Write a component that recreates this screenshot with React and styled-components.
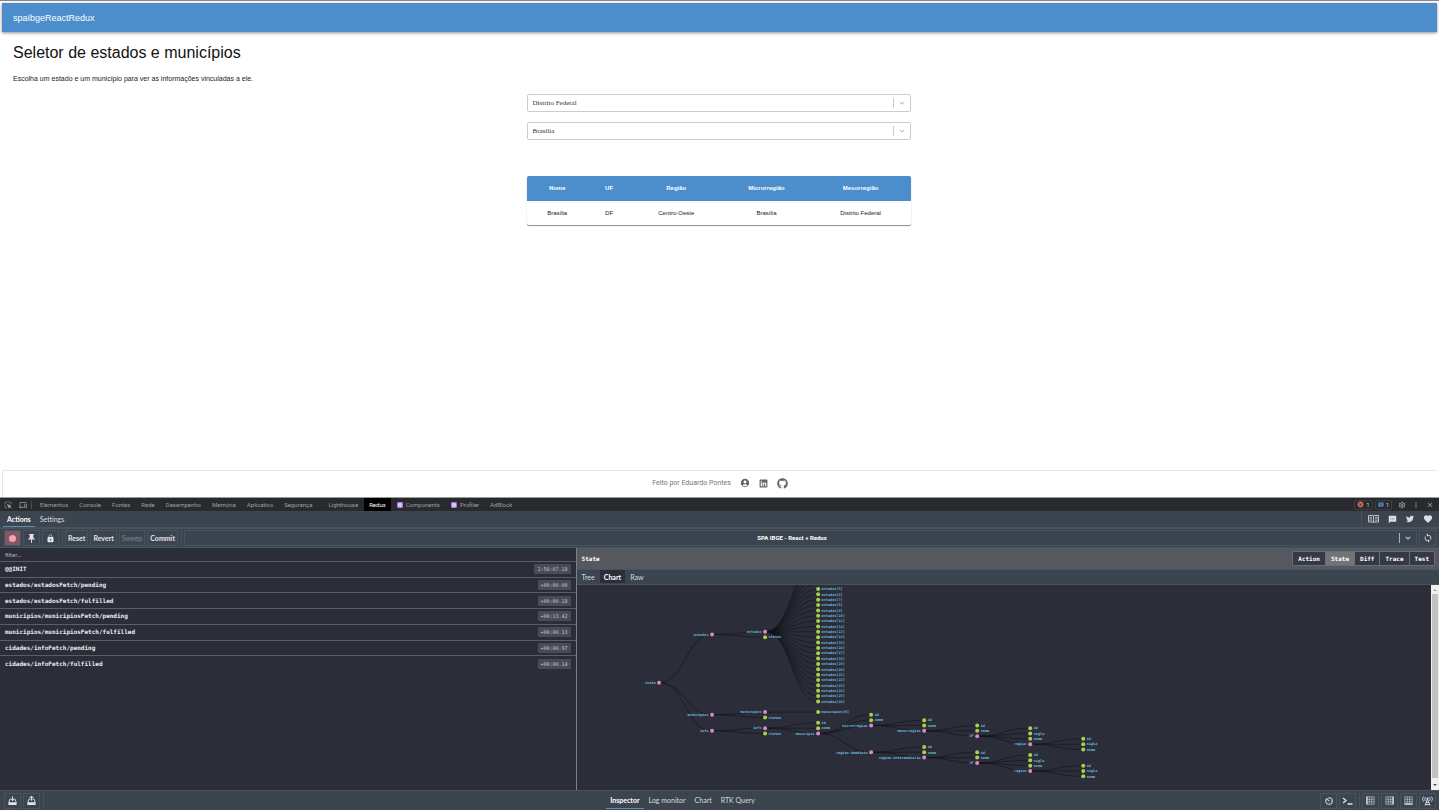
import styled, { createGlobalStyle } from "styled-components";
import {
  MdAccountCircle,
  MdPushPin,
  MdLock,
  MdSms,
  MdFavorite,
  MdSync,
  MdClose,
  MdMoreVert,
  MdOutlineSettings,
  MdAvTimer,
  MdKeyboardArrowDown,
  MdOutlineDevices,
  MdMessage,
  MdCancel,
} from "react-icons/md";
import { FaLinkedin, FaGithub, FaTwitter } from "react-icons/fa";
import { TiDownload, TiUpload } from "react-icons/ti";

const blue = "#4b8ecb";
const dark = "#2b2e39";
const bar = "#3c4450";
const line = "#465460";
const grey = "#5a5e66";
const mono = `"DejaVu Sans Mono", "Liberation Mono", monospace`;

const GlobalStyle = createGlobalStyle`
  * {
    box-sizing: border-box;
  }

  body {
    margin: 0;
    font-family: "Liberation Sans", Arial, sans-serif;
    background: #fff;
  }

  button, input, select {
    font: inherit;
    color: inherit;
    margin: 0;
    padding: 0;
    border: none;
    background: none;
    outline: none;
  }

  button {
    cursor: pointer;
  }

  svg {
    display: block;
    flex: none;
  }
`;

const Container = styled.div`
  display: flex;
  flex-direction: column;
  min-height: 100vh;
`;

/* page */
const Page = styled.div`
  display: flex;
  flex-direction: column;
  flex: 1;
  padding: 2px 2px 0;
  border-top: 1px solid #8c8686;
`;
const Header = styled.header`
  display: flex;
  align-items: center;
  height: 29px;
  padding: 0 11px;
  background-color: ${blue};
  color: white;
  font-size: 9px;
  box-shadow: 0 1px 3px rgba(0, 0, 0, 0.45);
`;
const Main = styled.main`
  flex: 1;
  padding: 11px 13px 11px 11px;
`;
const Title = styled.h1`
  margin: 0;
  font-size: 16px;
  font-weight: 400;
  line-height: 20px;
  color: #111;
`;
const Desc = styled.p`
  margin: 11px 0 10px;
  font-size: 7px;
  line-height: 10px;
  color: #222;
`;
const Content = styled.div`
  display: flex;
  flex-direction: column;
  gap: 10px;
  max-width: 384px;
  margin: 0 auto;
`;
const SelectBox = styled.label`
  display: flex;
  align-items: center;
  height: 18px;
  border: 1px solid #ccc;
  border-radius: 2px;
  color: #bbb;
`;
const Select = styled.select`
  flex: 1;
  height: 10px;
  padding: 0 5px;
  appearance: none;
  border-right: 1px solid #ccc;
  font-family: "Liberation Serif", serif;
  font-size: 7px;
  line-height: 10px;
  color: #333;
`;
const Arrow = styled.span`
  padding: 0 3px;
`;
const Table = styled.table`
  width: 100%;
  margin-top: 26px;
  table-layout: fixed;
  border-collapse: collapse;
  border-radius: 2px;
  overflow: hidden;
  font-size: 6px;
  text-align: center;
  box-shadow: 0 1px 1px rgba(0, 0, 0, 0.45);
`;
const Th = styled.th`
  width: ${(props) => props.$width};
  height: 25px;
  padding: 0 0 1px;
  background-color: ${blue};
  color: white;
`;
const Td = styled.td`
  height: 24px;
  padding: 0;
  color: #222;
`;
const Footer = styled.footer`
  display: flex;
  align-items: center;
  justify-content: center;
  gap: 9px;
  height: 27px;
  padding-bottom: 2px;
  border: 1px solid #e7e7e7;
  border-width: 1px 0 0 1px;
  font-family: Roboto, sans-serif;
  font-size: 7px;
  line-height: 8px;
  color: #757575;
`;
const FooterLink = styled.a`
  color: #666;
`;

/* devtools */
const Devtools = styled.section`
  display: flex;
  flex-direction: column;
  background-color: ${bar};
  color: #d8dade;
  font-family: Lato, sans-serif;
  font-size: 7px;
  line-height: 10px;
`;
const ChromeBar = styled.nav`
  display: flex;
  align-items: center;
  gap: 1px;
  height: 14px;
  border-top: 1px solid #9a9a9a;
  background-color: #292a2d;
  color: #9aa0a6;
  font-family: Roboto, sans-serif;
  font-size: 6px;
`;
const ChromeIcons = styled.div`
  display: flex;
  align-items: center;
  gap: 7px;
  height: 8px;
  padding: 0 4px;
  margin-right: 2px;
  border-right: 1px solid #494c50;
`;
const ChromeTab = styled.button`
  display: flex;
  align-items: center;
  gap: 3px;
  height: 13px;
  padding: 0 5px;
  margin-left: ${(props) => (props.$spaced ? "5px" : "0")};
  white-space: nowrap;
  background-color: ${(props) => (props.$active ? "#000" : "transparent")};
  color: ${(props) => (props.$active ? "#fff" : "inherit")};
`;
const ChromeRight = styled.div`
  display: flex;
  align-items: center;
  gap: 6px;
  margin-left: auto;
  padding-right: 5px;
`;
const Counters = styled.div`
  display: flex;
  gap: 2px;
`;
const Counter = styled.button`
  display: flex;
  align-items: center;
  gap: 2px;
  height: 10px;
  padding: 0 2px;
  border: 1px solid #3c3f43;
  border-radius: 2px;
  color: #d0d3d7;
`;
const TopBar = styled.div`
  display: flex;
  justify-content: space-between;
  height: 17px;
  border-bottom: 1px solid ${line};
`;
const Tabs = styled.div`
  display: flex;
  padding-left: 3px;
`;
const Tab = styled.button`
  padding: 0 4px;
  margin-right: 1px;
  font-weight: ${(props) => (props.$active ? "700" : "400")};
  color: ${(props) => (props.$active ? "#fff" : "inherit")};
  border-bottom: 1px solid
    ${(props) => (props.$active ? "#5a92ad" : "transparent")};
`;
const Links = styled.div`
  display: flex;
  align-items: center;
  gap: 9px;
  padding: 0 6px;
  border-left: 1px solid ${line};
`;
const IconLink = styled.a`
  color: #dcdee2;
`;
const Toolbar = styled.div`
  display: flex;
  align-items: center;
  height: 20px;
  padding: 0 3px 0 4px;
  border-top: 1px solid ${line};
  border-bottom: 1px solid ${line};
`;
const Group = styled.div`
  display: flex;
  gap: 2px;
  padding-right: 3px;
  margin-right: 2px;
  border-right: 1px solid ${line};

  &:last-child {
    padding-right: 0;
    margin-right: 0;
    border-right: none;
  }
`;
const ToolButton = styled.button`
  display: flex;
  align-items: center;
  justify-content: center;
  min-width: 17px;
  height: 16px;
  padding: 0 2px;
  border: 1px solid ${line};
  font-weight: 700;
  color: #e2e4e8;
  background-color: ${(props) => (props.$recording ? "#7d5866" : "transparent")};

  &:disabled {
    color: #7f8690;
    font-weight: 400;
  }
`;
const Dot = styled.span`
  width: 7px;
  height: 7px;
  border-radius: 50%;
  background-color: #fb9fb1;
`;
const InstanceBox = styled.label`
  display: flex;
  flex: 1;
  align-items: center;
  height: 16px;
  margin-right: 2px;
  border: 1px solid ${line};
`;
const Instance = styled.select`
  flex: 1;
  height: 10px;
  appearance: none;
  border-right: 1px solid #aab0b8;
  text-align: center;
  text-align-last: center;
  font-family: Roboto, sans-serif;
  font-size: 6px;
  font-weight: 700;
  color: #fff;
`;
const Panels = styled.div`
  display: flex;
  min-height: 242px;
  background-color: ${dark};
`;
const ActionPanel = styled.div`
  display: flex;
  flex-direction: column;
  width: 40%;
`;
const Filter = styled.input`
  height: 14px;
  padding: 0 5px;
  border-bottom: 1px solid ${grey};
  font-size: 6px;

  &::placeholder {
    color: #b4b7bd;
    opacity: 1;
  }
`;
const ActionList = styled.div`
  display: grid;
  grid-auto-rows: 1fr;
  min-height: 110px;
`;
const Action = styled.div`
  display: flex;
  align-items: center;
  justify-content: space-between;
  padding: 0 5px;
  font-family: ${mono};
  font-size: 6px;
  font-weight: 700;
  color: #eceef1;
  border-bottom: 1px solid ${grey};

  &:last-child {
    border-bottom: none;
  }
`;
const Time = styled.time`
  padding: 0 3px;
  border-radius: 1px;
  background-color: #484c56;
  font-size: 5px;
  font-weight: 400;
  color: #c3c5ca;
`;
const StatePanel = styled.div`
  display: flex;
  flex: 1;
  flex-direction: column;
  min-width: 0;
  border-left: 1px solid #7c8087;
`;
const StateHeader = styled.div`
  display: flex;
  align-items: center;
  justify-content: space-between;
  height: 21px;
  padding: 0 4px 0 5px;
  background-color: #55595f;
  font-family: ${mono};
  font-size: 6px;
  font-weight: 700;
  color: #fff;
`;
const ViewButtons = styled.div`
  display: flex;
  border: 1px solid #6a6e75;
  border-radius: 2px;
`;
const ViewButton = styled.button`
  height: 13px;
  padding: 0 5px;
  border-left: 1px solid #6a6e75;
  background-color: ${(props) => (props.$active ? "#717479" : "#353945")};

  &:first-child {
    border-left: none;
  }
`;
const SubTabs = styled.div`
  display: flex;
  height: 16px;
  padding: 0 1px 1px;
  border-top: 1px solid ${line};
  border-bottom: 1px solid ${line};
  background-color: ${bar};
`;
const SubTab = styled.button`
  padding: 0 4px;
  margin-right: 1px;
  font-weight: ${(props) => (props.$active ? "700" : "400")};
  color: ${(props) => (props.$active ? "#fff" : "inherit")};
  background-color: ${(props) => (props.$active ? dark : "transparent")};
`;
const ChartArea = styled.div`
  display: flex;
  flex: 1;
`;
const ChartSvg = styled.svg`
  flex: 1;
  min-width: 0;
  height: 205px;
`;
const Link = styled.path`
  fill: none;
  stroke: #101218;
  stroke-width: 1.2;
`;
const Node = styled.circle`
  fill: ${(props) => (props.$leaf ? "#acd04a" : "#e085cc")};
`;
const Label = styled.text`
  fill: #6cb6dc;
  font-family: ${mono};
  font-size: 7px;
  font-weight: 700;
`;
const Scrollbar = styled.div`
  display: flex;
  flex-direction: column;
  align-items: center;
  justify-content: space-between;
  width: 8px;
  background-color: #f1f1f1;
`;
const Thumb = styled.div`
  flex: 1;
  width: 6px;
  margin-bottom: 3px;
  background-color: #c1c1c1;
`;
const ScrollArrow = styled.svg`
  width: 8px;
  height: 9px;
  fill: ${(props) => (props.$dim ? "#a3a3a3" : "#505050")};
`;
const BottomBar = styled.div`
  display: flex;
  align-items: center;
  justify-content: space-between;
  height: 20px;
  padding: 0 3px 0 4px;
  border-top: 1px solid ${line};
`;
const BottomTabs = styled.div`
  display: flex;
  height: 17px;
`;
const BottomRight = styled.div`
  display: flex;
`;

const columns = [
  { name: "Nome", value: "Brasília", width: "16%" },
  { name: "UF", value: "DF", width: "11%" },
  { name: "Região", value: "Centro-Oeste", width: "24%" },
  { name: "Microrregião", value: "Brasília", width: "23%" },
  { name: "Mesorregião", value: "Distrito Federal", width: "26%" },
];

const actions = [
  ["@@INIT", "2:58:07.18"],
  ["estados/estadosFetch/pending", "+00:00.00"],
  ["estados/estadosFetch/fulfilled", "+00:00.18"],
  ["municipios/municipiosFetch/pending", "+00:13.42"],
  ["municipios/municipiosFetch/fulfilled", "+00:00.13"],
  ["cidades/infoFetch/pending", "+00:00.97"],
  ["cidades/infoFetch/fulfilled", "+00:00.14"],
];

// every node is [label, row, children]
const estados = Array.from({ length: 27 }, (_, i) => [`estados[${i}]`, i - 5]);

const fields = (row) => [
  ["id", row],
  ["nome", row + 1],
];

const uf = (row) => [
  "UF",
  row,
  [
    ["id", row - 1.5],
    ["sigla", row - 0.5],
    ["nome", row + 0.5],
    [
      "regiao",
      row + 1.5,
      [
        ["id", row + 0.5],
        ["sigla", row + 1.5],
        ["nome", row + 2.5],
      ],
    ],
  ],
];

const mesorregiao = ["mesorregiao", 26.5, [...fields(25.5), uf(27.5)]];
const microrregiao = ["microrregiao", 25.5, [...fields(24.5), mesorregiao]];
const intermediaria = [
  "regiao-intermediaria",
  31.5,
  [...fields(30.5), uf(32.5)],
];
const imediata = ["regiao-imediata", 30.5, [...fields(29.5), intermediaria]];
const municipio = ["municipio", 27, [...fields(23.5), microrregiao, imediata]];

const tree = [
  "state",
  17.5,
  [
    ["estados", 8.5, [["estados", 8, estados], ["status", 9]]],
    [
      "municipios",
      23.5,
      [["municipios", 23, [["municipios[0]", 23]]], ["status", 24]],
    ],
    ["info", 26.5, [["info", 26, [...fields(25), municipio]], ["status", 27]]],
  ],
];

const x = (depth) => 164 + depth * 106;
const y = (row) => 8 + row * 10.7;

const Branch = ({ node, depth = 0 }) => {
  const [label, row, children = []] = node;
  const isLeaf = children.length === 0;
  const mid = (x(depth) + x(depth + 1)) / 2;
  const end = x(depth + 1);

  return (
    <g>
      {children.map((child) => (
        <Link
          key={child[0]}
          d={`M${x(depth)} ${y(row)}C${mid} ${y(row)} ${mid} ${y(
            child[1]
          )} ${end} ${y(child[1])}`}
        />
      ))}
      {/* rows above the visible area keep only their link */}
      {children
        .filter((child) => child[1] >= 0)
        .map((child) => (
          <Branch key={child[0]} node={child} depth={depth + 1} />
        ))}
      <Node cx={x(depth)} cy={y(row)} r="4" $leaf={isLeaf} />
      <Label
        x={x(depth) + (isLeaf ? 7 : -7)}
        y={y(row) + 2.5}
        textAnchor={isLeaf ? "start" : "end"}
      >
        {label}
      </Label>
    </g>
  );
};

const InspectIcon = () => (
  <svg width="8" height="8" viewBox="0 0 16 16" fill="none" stroke="currentColor">
    <path d="M14 6V2H2v12h4" strokeWidth="1.4" strokeDasharray="2 1" />
    <path d="M7 7l7 3-3 1-1 3zM11 11l4 4" strokeWidth="1.6" fill="currentColor" />
  </svg>
);

const ReactIcon = () => (
  <svg width="6" height="6" viewBox="0 0 16 16">
    <rect width="16" height="16" rx="2" fill="#9a6be0" />
    <g fill="none" stroke="#fff" strokeWidth="1.2">
      <ellipse cx="8" cy="8" rx="6" ry="2.4" />
      <ellipse cx="8" cy="8" rx="6" ry="2.4" transform="rotate(60 8 8)" />
      <ellipse cx="8" cy="8" rx="6" ry="2.4" transform="rotate(120 8 8)" />
    </g>
  </svg>
);

const BookIcon = () => (
  <svg width="11" height="8" viewBox="0 0 22 16" fill="none" stroke="currentColor">
    <path d="M1 1h9l1 1 1-1h9v13h-9l-1 1-1-1H1zM11 2v13" strokeWidth="1.6" />
    <path
      d="M3 4.5h5M3 7.5h5M3 10.5h5M14 4.5h5M14 7.5h5M14 10.5h5"
      strokeWidth="1.4"
    />
  </svg>
);

const TerminalIcon = () => (
  <svg width="11" height="10" viewBox="0 0 22 20" fill="none" stroke="currentColor">
    <path d="M2 4l6 5-6 5M11 16h10" strokeWidth="2.6" />
  </svg>
);

const bars = {
  left: "M2 1v16",
  right: "M16 1v16",
  bottom: "M1 16h16",
};

const LayoutIcon = ({ side }) => (
  <svg width="9" height="9" viewBox="0 0 18 18" fill="none" stroke="currentColor">
    <path d="M1.5 1.5h15v15h-15zM6.5 2v14M11.5 2v14M2 6.5h14M2 11.5h14" />
    <path d={bars[side]} strokeWidth="2.4" />
  </svg>
);

const TowerIcon = () => (
  <svg width="11" height="10" viewBox="0 0 22 20" fill="none" stroke="currentColor">
    <path d="M11 6L6 19M11 6l5 13M8 13h6M7 17h8" strokeWidth="1.8" />
    <path
      d="M7 2q-3 4 0 8M15 2q3 4 0 8M3 1q-4 5 0 10M19 1q4 5 0 10"
      strokeWidth="1.6"
    />
    <circle cx="11" cy="5" r="2" fill="currentColor" stroke="none" />
  </svg>
);

const Dropdown = ({ label, value }) => (
  <SelectBox>
    <Select aria-label={label} defaultValue={value}>
      <option>{value}</option>
    </Select>
    <Arrow>
      <MdKeyboardArrowDown size={10} />
    </Arrow>
  </SelectBox>
);

const App = () => {
  return (
    <Container>
      <GlobalStyle />
      <Page>
        <Header>spaIbgeReactRedux</Header>
        <Main>
          <Title>Seletor de estados e municípios</Title>
          <Desc>
            Escolha um estado e um município para ver as informações vinculadas
            a ele.
          </Desc>
          <Content>
            <Dropdown label="Estado" value="Distrito Federal" />
            <Dropdown label="Município" value="Brasília" />
            <Table>
              <thead>
                <tr>
                  {columns.map((col) => (
                    <Th key={col.name} $width={col.width}>
                      {col.name}
                    </Th>
                  ))}
                </tr>
              </thead>
              <tbody>
                <tr>
                  {columns.map((col) => (
                    <Td key={col.name}>{col.value}</Td>
                  ))}
                </tr>
              </tbody>
            </Table>
          </Content>
        </Main>
        <Footer>
          Feito por Eduardo Pontes
          <FooterLink href="#perfil" aria-label="Perfil">
            <MdAccountCircle size={10} />
          </FooterLink>
          <FooterLink href="#linkedin" aria-label="LinkedIn">
            <FaLinkedin size={9} />
          </FooterLink>
          <FooterLink href="#github" aria-label="GitHub">
            <FaGithub size={11} />
          </FooterLink>
        </Footer>
      </Page>

      <Devtools>
        <ChromeBar>
          <ChromeIcons>
            <InspectIcon />
            <MdOutlineDevices size={8} />
          </ChromeIcons>
          <ChromeTab>Elementos</ChromeTab>
          <ChromeTab>Console</ChromeTab>
          <ChromeTab>Fontes</ChromeTab>
          <ChromeTab>Rede</ChromeTab>
          <ChromeTab>Desempenho</ChromeTab>
          <ChromeTab>Memória</ChromeTab>
          <ChromeTab>Aplicativo</ChromeTab>
          <ChromeTab>Segurança</ChromeTab>
          <ChromeTab $spaced>Lighthouse</ChromeTab>
          <ChromeTab $active>Redux</ChromeTab>
          <ChromeTab>
            <ReactIcon />
            Components
          </ChromeTab>
          <ChromeTab>
            <ReactIcon />
            Profiler
          </ChromeTab>
          <ChromeTab>AdBlock</ChromeTab>
          <ChromeRight>
            <Counters>
              <Counter>
                <MdCancel size={7} color="#e46962" />1
              </Counter>
              <Counter>
                <MdMessage size={6} color="#669df6" />1
              </Counter>
            </Counters>
            <MdOutlineSettings size={8} />
            <MdMoreVert size={8} />
            <MdClose size={8} />
          </ChromeRight>
        </ChromeBar>

        <TopBar>
          <Tabs>
            <Tab $active>Actions</Tab>
            <Tab>Settings</Tab>
          </Tabs>
          <Links>
            <IconLink href="#docs" aria-label="Documentation">
              <BookIcon />
            </IconLink>
            <IconLink href="#feedback" aria-label="Feedback">
              <MdSms size={9} />
            </IconLink>
            <IconLink href="#twitter" aria-label="Twitter">
              <FaTwitter size={8} />
            </IconLink>
            <IconLink href="#support" aria-label="Support">
              <MdFavorite size={10} />
            </IconLink>
          </Links>
        </TopBar>

        <Toolbar>
          <Group>
            <ToolButton $recording aria-label="Pause recording">
              <Dot />
            </ToolButton>
            <ToolButton aria-label="Persist">
              <MdPushPin size={11} />
            </ToolButton>
            <ToolButton aria-label="Lock">
              <MdLock size={9} />
            </ToolButton>
          </Group>
          <Group>
            <ToolButton>Reset</ToolButton>
            <ToolButton>Revert</ToolButton>
            <ToolButton disabled>Sweep</ToolButton>
            <ToolButton>Commit</ToolButton>
          </Group>
          <InstanceBox>
            <Instance aria-label="Instance">
              <option>SPA IBGE - React + Redux</option>
            </Instance>
            <Arrow>
              <MdKeyboardArrowDown size={10} />
            </Arrow>
          </InstanceBox>
          <ToolButton aria-label="Sync">
            <MdSync size={10} />
          </ToolButton>
        </Toolbar>

        <Panels>
          <ActionPanel>
            <Filter placeholder="filter..." aria-label="filter" />
            <ActionList>
              {actions.map(([name, time]) => (
                <Action key={name}>
                  {name}
                  <Time>{time}</Time>
                </Action>
              ))}
            </ActionList>
          </ActionPanel>
          <StatePanel>
            <StateHeader>
              State
              <ViewButtons>
                {["Action", "State", "Diff", "Trace", "Test"].map((view) => (
                  <ViewButton key={view} $active={view === "State"}>
                    {view}
                  </ViewButton>
                ))}
              </ViewButtons>
            </StateHeader>
            <SubTabs>
              <SubTab>Tree</SubTab>
              <SubTab $active>Chart</SubTab>
              <SubTab>Raw</SubTab>
            </SubTabs>
            <ChartArea>
              <ChartSvg viewBox="0 0 1708 408" preserveAspectRatio="xMinYMin meet">
                <Branch node={tree} />
              </ChartSvg>
              <Scrollbar>
                <ScrollArrow viewBox="0 0 8 9" $dim>
                  <path d="M2 6l2-2 2 2z" />
                </ScrollArrow>
                <Thumb />
                <ScrollArrow viewBox="0 0 8 9">
                  <path d="M2 3l2 2 2-2z" />
                </ScrollArrow>
              </Scrollbar>
            </ChartArea>
          </StatePanel>
        </Panels>

        <BottomBar>
          <Group as="nav">
            <ToolButton aria-label="Import">
              <TiDownload size={11} />
            </ToolButton>
            <ToolButton aria-label="Export">
              <TiUpload size={11} />
            </ToolButton>
          </Group>
          <BottomTabs>
            <Tab $active>Inspector</Tab>
            <Tab>Log monitor</Tab>
            <Tab>Chart</Tab>
            <Tab>RTK Query</Tab>
          </BottomTabs>
          <BottomRight>
            <Group>
              <ToolButton aria-label="Slider">
                <MdAvTimer size={10} />
              </ToolButton>
              <ToolButton aria-label="Dispatcher">
                <TerminalIcon />
              </ToolButton>
            </Group>
            <Group>
              <ToolButton aria-label="Left">
                <LayoutIcon side="left" />
              </ToolButton>
              <ToolButton aria-label="Right">
                <LayoutIcon side="right" />
              </ToolButton>
              <ToolButton aria-label="Bottom">
                <LayoutIcon side="bottom" />
              </ToolButton>
              <ToolButton aria-label="Remote">
                <TowerIcon />
              </ToolButton>
            </Group>
          </BottomRight>
        </BottomBar>
      </Devtools>
    </Container>
  );
};

export default App;
